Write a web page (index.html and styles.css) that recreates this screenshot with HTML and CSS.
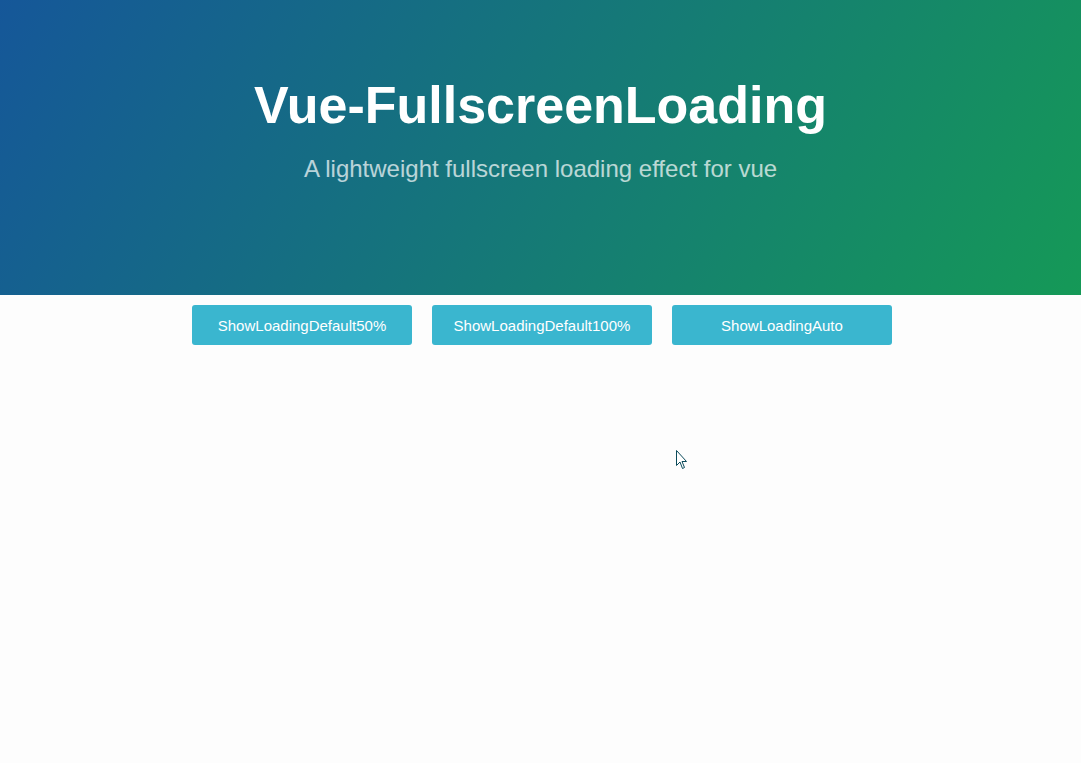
FILE: index.html
```html
<!DOCTYPE html>
<html lang="en">
<head>
<meta charset="utf-8">
<title>Vue-FullscreenLoading</title>
<link rel="stylesheet" href="styles.css">
</head>
<body>
<header class="page-header">
  <h1 class="project-name">Vue-FullscreenLoading</h1>
  <h2 class="project-tagline">A lightweight fullscreen loading effect for vue</h2>
</header>
<main class="main-content">
  <div class="btn-row">
    <button class="btn">ShowLoadingDefault50%</button>
    <button class="btn">ShowLoadingDefault100%</button>
    <button class="btn">ShowLoadingAuto</button>
  </div>
</main>
<svg class="cursor" width="12" height="20" viewBox="0 0 12 20"><path d="M0.5 0.5 L0.5 15.5 L4 12 L6.5 18.5 L8.5 17.5 L6 11.5 L10.5 11.5 Z" fill="#fff" stroke="#0b4a5a" stroke-width="1"/></svg>
</body>
</html>
```
FILE: styles.css
```css
html, body {
  margin: 0;
  padding: 0;
}
body {
  background: #fdfdfd;
  font-family: "Liberation Sans", Arial, sans-serif;
  min-height: 763px;
  position: relative;
}
.page-header {
  height: 295px;
  box-sizing: border-box;
  padding-top: 75px;
  text-align: center;
  color: #fff;
  background-color: #159957;
  background-image: linear-gradient(120deg, #155799, #159957);
}
.project-name {
  margin: 0;
  font-size: 52px;
  font-weight: bold;
  line-height: 60px;
}
.project-tagline {
  margin: 19px 0 0;
  font-size: 24px;
  font-weight: normal;
  line-height: 30px;
  opacity: 0.7;
}
.main-content {
  padding-top: 10px;
}
.btn-row {
  display: flex;
  justify-content: center;
  gap: 20px;
  padding-left: 3px;
}
.btn {
  width: 220px;
  height: 40px;
  border: 0;
  border-radius: 3px;
  background: #3ab6cf;
  color: #fff;
  font-family: "Liberation Sans", Arial, sans-serif;
  font-size: 15px;
  padding: 0;
  cursor: pointer;
}
.cursor {
  position: absolute;
  left: 676px;
  top: 450px;
}
```
